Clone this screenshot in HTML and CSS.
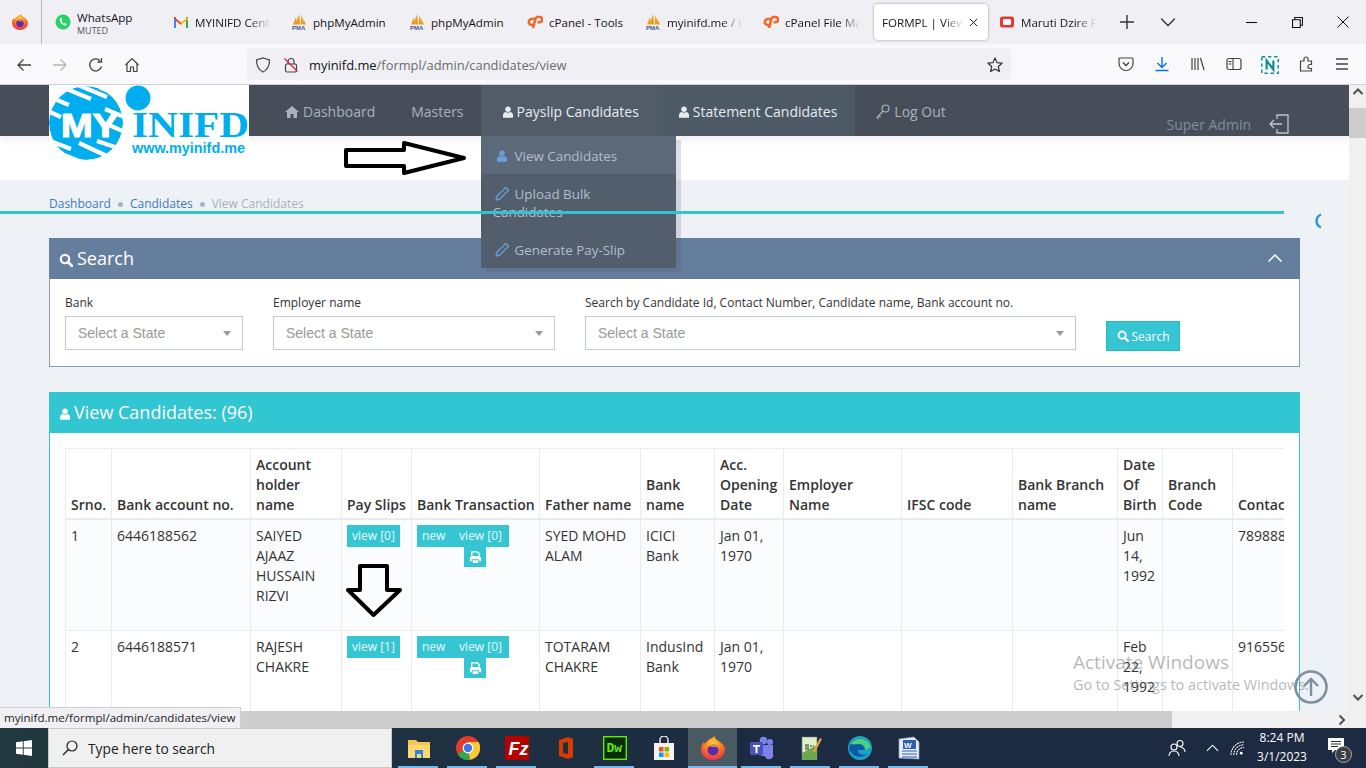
FILE: index.html
```html
<!DOCTYPE html>
<html lang="en">
<head>
<meta charset="utf-8">
<title>FORMPL | View Candidates</title>
<link rel="stylesheet" href="styles.css">
</head>
<body>
<svg class="defs" width="0" height="0" aria-hidden="true">
  <defs>
    <radialGradient id="ffg" cx="50%" cy="30%" r="75%"><stop offset="0" stop-color="#ffd23a"/><stop offset=".5" stop-color="#ff7a1a"/><stop offset="1" stop-color="#e8235e"/></radialGradient>
    <symbol id="i-firefox" viewBox="0 0 16 16"><path d="M9 0c.2 1.600 1.400 2.300 2.800 3.300C14.300 5 16 6.500 16 9A8 7 0 0 1 0 9C0 7 .7 5.300 2 4l.6 1.500C3.600 3 6.800 1.800 9 0z" fill="url(#ffg)"/><circle cx="8" cy="9.300" r="3.700" fill="#5a2bb3"/><path d="M4.500 7c1.800-1.500 5.200-1.500 7 .7-2.300-.6-4.700-.8-7-.7z" fill="#ff9a2a"/></symbol>
    <symbol id="i-pma" viewBox="0 0 16 16"><path d="M4.500 10.500L8 0l1.200 10.500zM9.600 10.500L10.500 1l2.700 9.500zM2 10.500L5 3l1 7.500zM13 10.500L12 4l3 6.500z" fill="#f29a1f"/><text x="1" y="16" font-size="6" font-weight="700" font-family="Liberation Sans" fill="#3a5a8c">PMA</text></symbol>
    <symbol id="i-cp" viewBox="0 0 16 16"><path d="M7.500 5H4.800a3 3 0 0 0 0 6H6" fill="none" stroke="#f3682a" stroke-width="2.600"/><path d="M9 3h3.500a2.600 2.600 0 0 1 0 5.200H10.500M9 3L6 14" fill="none" stroke="#f3682a" stroke-width="2.600"/></symbol>
    <symbol id="i-user" viewBox="0 0 12 14"><circle cx="6" cy="3.600" r="3.300"/><path d="M0 14v-3.500C0 8.300 2 7 3.500 7c.8.600 1.600.9 2.500.9s1.700-.3 2.500-.9C10 7 12 8.300 12 10.500V14z"/></symbol>
    <symbol id="i-pencil" viewBox="0 0 16 16"><path d="M11.500 1.500l3 3L5 14l-4 1 1-4z" fill="none" stroke="currentColor" stroke-width="1.400" stroke-linejoin="round"/></symbol>
    <symbol id="i-search" viewBox="0 0 14 14"><circle cx="6" cy="6" r="4.200" fill="none" stroke="currentColor" stroke-width="2.200"/><path d="M9 9l4 4" stroke="currentColor" stroke-width="2.600" stroke-linecap="round"/></symbol>
    <symbol id="i-print" viewBox="0 0 14 14"><path d="M3 1h6l2 2v3H3z" fill="none" stroke="currentColor" stroke-width="1.400"/><path d="M1 6.500h12V11h-2V9H3v2H1zM4 10h6v3H4z" fill="currentColor"/></symbol>
  </defs>
</svg>

<header class="tabbar">
  <div class="ff-btn"><svg class="ico16"><use href="#i-firefox"/></svg></div>
  <div class="tab">
    <svg class="ico16" viewBox="0 0 16 16"><circle cx="8" cy="8" r="7.500" fill="#25d366"/><path d="M5.300 4.300c-1 1-.8 2.700.7 4.600 1.600 2 3.300 3 4.700 2.600.8-.3 1.200-1 1.100-1.500L10 9c-.3.400-.6.800-1 .7-1-.4-2.300-1.800-2.600-2.800 0-.4.400-.7.600-1L6.300 4c-.3-.1-.7 0-1 .3z" fill="#fff"/></svg>
    <span class="wa"><span class="wa-name">WhatsApp</span><span class="wa-sub">MUTED</span></span>
  </div>
  <div class="tab">
    <svg class="ico16" viewBox="0 0 16 16"><path d="M1 14V3l2 0v11z" fill="#4285f4"/><path d="M13 14V3h2v11z" fill="#34a853"/><path d="M1 3l7 5.500V11L1 5.500z" fill="#ea4335"/><path d="M15 3L8 8.500V11l7-5.500z" fill="#fbbc04"/></svg>
    <span class="tab-label fade">MYINIFD Central</span>
  </div>
  <div class="tab"><svg class="ico16"><use href="#i-pma"/></svg><span class="tab-label">phpMyAdmin</span></div>
  <div class="tab"><svg class="ico16"><use href="#i-pma"/></svg><span class="tab-label">phpMyAdmin</span></div>
  <div class="tab"><svg class="ico16"><use href="#i-cp"/></svg><span class="tab-label">cPanel - Tools</span></div>
  <div class="tab"><svg class="ico16"><use href="#i-pma"/></svg><span class="tab-label fade">myinifd.me / localhost</span></div>
  <div class="tab"><svg class="ico16"><use href="#i-cp"/></svg><span class="tab-label fade">cPanel File Manager</span></div>
  <div class="tab tab-active"><span class="tab-label fade">FORMPL | View Candidates</span>
    <svg class="tab-x" viewBox="0 0 10 10"><path d="M1 1l8 8M9 1l-8 8" stroke="#222" stroke-width="1.100"/></svg>
  </div>
  <div class="tab"><svg class="ico16" viewBox="0 0 16 16"><rect x="1" y="2.500" width="14" height="11" rx="2.500" fill="#e8392f"/><rect x="4" y="5" width="8" height="6" rx="1" fill="#fff"/></svg><span class="tab-label fade">Maruti Dzire Price</span></div>
  <div class="tb-btn tb-plus"><svg class="ico12" viewBox="0 0 12 12"><path d="M6 0v12M0 6h12" stroke="#333" stroke-width="1.200"/></svg></div>
  <div class="tb-btn tb-chev"><svg class="ico12" viewBox="0 0 12 12"><path d="M0 3l6 6 6-6" fill="none" stroke="#333" stroke-width="1.100"/></svg></div>
  <div class="winctl">
    <div class="win-btn"><svg class="ico10" viewBox="0 0 10 10"><path d="M0 5h10" stroke="#111"/></svg></div>
    <div class="win-btn"><svg class="ico10" viewBox="0 0 10 10"><path d="M2.500 2.500V.5h7v7h-2M.5 2.500h7v7h-7z" fill="none" stroke="#111"/></svg></div>
    <div class="win-btn"><svg class="ico10b" viewBox="0 0 12 12"><path d="M.5.5l11 11M11.500.5l-11 11" stroke="#111"/></svg></div>
  </div>
</header>

<nav class="toolbar">
  <div class="tool"><svg class="ico16" viewBox="0 0 16 16"><path d="M15 8H2M7.500 2.500L2 8l5.500 5.500" fill="none" stroke="#444" stroke-width="1.300"/></svg></div>
  <div class="tool"><svg class="ico16" viewBox="0 0 16 16"><path d="M1 8h13M8.500 2.500L14 8l-5.500 5.500" fill="none" stroke="#b5b5b9" stroke-width="1.300"/></svg></div>
  <div class="tool"><svg class="ico16" viewBox="0 0 16 16"><path d="M13.500 9.500A6 6 0 1 1 12 3.700M13.500 1v4h-4" fill="none" stroke="#444" stroke-width="1.300"/></svg></div>
  <div class="tool"><svg class="ico16" viewBox="0 0 16 16"><path d="M1.500 8L8 1.500 14.500 8M3 7v7.500h3.500V10h3v4.500H13V7" fill="none" stroke="#444" stroke-width="1.200"/></svg></div>
  <div class="urlbar">
    <svg class="ico16" viewBox="0 0 16 16"><path d="M8 1l6.500 2c0 5-1.500 9.500-6.500 12C3 12.500 1.500 8 1.500 3z" fill="none" stroke="#444" stroke-width="1.200"/></svg>
    <svg class="ico16 lock" viewBox="0 0 16 16"><rect x="2.500" y="7" width="11" height="8" rx="1.500" fill="none" stroke="#444" stroke-width="1.200"/><path d="M5 7V4.500a3 3 0 0 1 6 0V7" fill="none" stroke="#444" stroke-width="1.200"/><path d="M1.500 1.500l13 13" stroke="#e22850" stroke-width="1.400"/></svg>
    <span class="url"><b class="url-host">myinifd.me</b>/formpl/admin/candidates/view</span>
    <svg class="ico16 star" viewBox="0 0 16 16"><path d="M8 1l2.100 4.700 5 .5-3.800 3.300 1.100 5L8 11.900l-4.400 2.600 1.100-5L.9 6.200l5-.5z" fill="none" stroke="#333" stroke-width="1.200" stroke-linejoin="round"/></svg>
  </div>
  <div class="tools-right">
    <div class="tool"><svg class="ico16" viewBox="0 0 16 16"><path d="M2 2h12c.6 0 1 .4 1 1v4.500a7 7 0 0 1-14 0V3c0-.6.400-1 1-1z" fill="none" stroke="#444" stroke-width="1.200"/><path d="M5 6.500l3 3 3-3" fill="none" stroke="#444" stroke-width="1.400"/></svg></div>
    <div class="tool"><svg class="ico16" viewBox="0 0 16 16"><path d="M8 1v10M3.500 7L8 11.500 12.500 7M1.500 14.500h13" fill="none" stroke="#0a70e0" stroke-width="1.400"/></svg></div>
    <div class="tool"><svg class="ico16" viewBox="0 0 16 16"><path d="M2 2v12M5 2v12M8 2v12M10.500 2l3.500 12" fill="none" stroke="#444" stroke-width="1.200"/></svg></div>
    <div class="tool"><svg class="ico16" viewBox="0 0 16 16"><rect x="1" y="2.500" width="14" height="11" rx="2" fill="none" stroke="#444" stroke-width="1.200"/><path d="M7 2.500v11M2.500 5.500h3M2.500 8h3" fill="none" stroke="#444" stroke-width="1.100"/></svg></div>
    <div class="tool"><svg class="ico16n" viewBox="0 0 16 16"><rect x=".7" y=".7" width="14.600" height="14.600" fill="none" stroke="#0e8a98" stroke-width="1.300" stroke-dasharray="3 2.500"/><path d="M5 12V4l6 8V4" fill="none" stroke="#0e8a98" stroke-width="1.900"/></svg></div>
    <div class="tool"><svg class="ico16" viewBox="0 0 16 16"><path d="M2 5h3.500V3a2 2 0 0 1 4 0v2H13v3.500h-1.500a2 2 0 0 0 0 4H13V15H2z" fill="none" stroke="#444" stroke-width="1.200" transform="translate(.5 0)"/></svg></div>
    <div class="tool"><svg class="ico16" viewBox="0 0 16 16"><path d="M2 3h12M2 8h12M2 13h12" stroke="#444" stroke-width="1.300"/></svg></div>
  </div>
</nav>

<div class="viewport">
  <div class="page-col">
    <main class="page">
      <div class="band">
        <div class="site-nav">
          <a class="logo" href="#">
            <svg class="logo-svg" viewBox="0 0 200 76">
              <defs><clipPath id="globe"><circle cx="37" cy="38" r="37"/></clipPath></defs>
              <rect width="200" height="76" fill="#fff"/>
              <g clip-path="url(#globe)">
                <circle cx="37" cy="38" r="37" fill="#00aeef"/>
                <path d="M8 0l34 14M24 -2l34 14M50 2l22 9M-4 10l24 10M-6 24l18 8M-4 54l26 10M0 64l30 12M30 58l30 14M48 56l30 10M60 40l20 9M56 24l24 10" stroke="#fff" stroke-width="4.200"/>
              </g>
              <text class="logo-my" x="12" y="52" textLength="57" lengthAdjust="spacingAndGlyphs">MY</text>
              <circle cx="89" cy="13" r="12.500" fill="#00aeef"/>
              <text class="logo-in" x="83" y="52" textLength="117" lengthAdjust="spacingAndGlyphs">INIFD</text>
              <text class="logo-url" x="83" y="68" textLength="113" lengthAdjust="spacingAndGlyphs">www.myinifd.me</text>
            </svg>
          </a>
          <ul class="menu">
            <li class="menu-item"><svg class="nav-home" viewBox="0 0 14 12"><path d="M7 0L0 6h2v6h3.500V8h3v4H12V6h2z" fill="currentColor"/></svg>Dashboard</li>
            <li class="menu-item">Masters</li>
            <li class="menu-item is-open"><svg class="nav-user"><use href="#i-user"/></svg>Payslip Candidates
              <ul class="dropdown">
                <li class="drop-item is-current"><svg class="drop-user"><use href="#i-user"/></svg>View Candidates</li>
                <li class="drop-item"><svg class="drop-pen"><use href="#i-pencil"/></svg>Upload Bulk Candidates</li>
                <li class="drop-item"><svg class="drop-pen"><use href="#i-pencil"/></svg>Generate Pay-Slip</li>
              </ul>
            </li>
            <li class="menu-item is-lit"><svg class="nav-user"><use href="#i-user"/></svg>Statement Candidates</li>
            <li class="menu-item"><svg class="nav-key" viewBox="0 0 14 16"><circle cx="9.500" cy="4.500" r="3.500" fill="none" stroke="currentColor" stroke-width="1.200"/><path d="M7 7L1 13.500l1.500 1.500M3 11.500l1.500 1.500" fill="none" stroke="currentColor" stroke-width="1.200"/></svg>Log Out</li>
          </ul>
          <div class="nav-user-box">
            <span>Super Admin</span>
            <svg class="exit" viewBox="0 0 20 20"><path d="M8 5V1h11v18H8v-4M13 10H1M5 6l-4 4 4 4" fill="none" stroke="currentColor" stroke-width="1.300"/></svg>
          </div>
        </div>
      </div>

      <div class="crumbs">
        <a class="crumb" href="#">Dashboard</a><i class="dot"></i>
        <a class="crumb" href="#">Candidates</a><i class="dot"></i>
        <span class="crumb-now">View Candidates</span>
      </div>

      <section class="panel panel-search">
        <div class="panel-head">
          <svg class="ph-search"><use href="#i-search"/></svg><span>Search</span>
          <svg class="ph-chev" viewBox="0 0 14 8"><path d="M.5 7.500L7 1l6.500 6.500" fill="none" stroke="#fff" stroke-width="1.500"/></svg>
        </div>
        <form class="search-form">
          <div class="field f-bank"><label class="field-label">Bank</label><div class="select"><span>Select a State</span><i class="caret"></i></div></div>
          <div class="field f-emp"><label class="field-label">Employer name</label><div class="select"><span>Select a State</span><i class="caret"></i></div></div>
          <div class="field f-any"><label class="field-label">Search by Candidate Id, Contact Number, Candidate name, Bank account no.</label><div class="select"><span>Select a State</span><i class="caret"></i></div></div>
          <button class="search-btn" type="button"><svg class="btn-search"><use href="#i-search"/></svg>Search</button>
        </form>
      </section>

      <section class="panel panel-list">
        <div class="panel-head">
          <svg class="ph-user"><use href="#i-user"/></svg><span>View Candidates: (96)</span>
        </div>
        <div class="panel-body">
          <div class="table-wrap">
            <table class="grid">
              <colgroup>
                <col class="c1"><col class="c2"><col class="c3"><col class="c4"><col class="c5"><col class="c6"><col class="c7"><col class="c8"><col class="c9"><col class="c10"><col class="c11"><col class="c12"><col class="c13"><col class="c14">
              </colgroup>
              <thead>
                <tr>
                  <th>Srno.</th><th>Bank account no.</th><th>Account holder name</th><th>Pay Slips</th><th class="th-wide">Bank Transaction</th><th>Father name</th><th>Bank name</th><th>Acc. Opening Date</th><th>Employer Name</th><th>IFSC code</th><th>Bank Branch name</th><th>Date Of Birth</th><th>Branch Code</th><th>Contact</th>
                </tr>
              </thead>
              <tbody>
                <tr class="odd">
                  <td>1</td><td>6446188562</td><td>SAIYED AJAAZ HUSSAIN RIZVI</td>
                  <td><a class="chip" href="#">view [0]</a></td>
                  <td><div class="chip-group"><a class="chip" href="#">new</a><a class="chip" href="#">view [0]</a></div><div class="print-row"><a class="chip-print" href="#"><svg class="print"><use href="#i-print"/></svg></a></div></td>
                  <td>SYED MOHD ALAM</td><td>ICICI Bank</td><td>Jan 01, 1970</td><td></td><td></td><td></td><td>Jun 14, 1992</td><td></td><td class="nowrap">789888</td>
                </tr>
                <tr>
                  <td>2</td><td>6446188571</td><td>RAJESH CHAKRE</td>
                  <td><a class="chip" href="#">view [1]</a></td>
                  <td><div class="chip-group"><a class="chip" href="#">new</a><a class="chip" href="#">view [0]</a></div><div class="print-row"><a class="chip-print" href="#"><svg class="print"><use href="#i-print"/></svg></a></div></td>
                  <td>TOTARAM CHAKRE</td><td>IndusInd Bank</td><td>Jan 01, 1970</td><td></td><td></td><td></td><td>Feb 22, 1992</td><td></td><td class="nowrap">916556</td>
                </tr>
              </tbody>
            </table>
          </div>
        </div>
      </section>

      <svg class="spinner" viewBox="0 0 10 16"><path d="M9 1.500A7 7 0 0 0 9 14.500" fill="none" stroke="#2a96dc" stroke-width="2.400"/></svg>
      <svg class="anno-right" viewBox="0 0 124 36"><path d="M2 10h58V3l60 15-60 15v-7H2z" fill="#fff" stroke="#000" stroke-width="4" stroke-linejoin="round"/></svg>
      <svg class="anno-down" viewBox="0 0 56 53"><path d="M14 2h27v24h13L27.500 51 2 26h12z" fill="#fbfcfe" stroke="#000" stroke-width="4" stroke-linejoin="round"/></svg>
      <div class="activate"><div class="act-1">Activate Windows</div><div class="act-2">Go to Settings to activate Windows.</div></div>
      <svg class="to-top" viewBox="0 0 34 34"><circle cx="17" cy="17" r="15.500" fill="none" stroke="#7d8fa1" stroke-width="2.600"/><path d="M17 26V9M10 16l7-7 7 7" fill="none" stroke="#7d8fa1" stroke-width="2.400"/></svg>
    </main>
    <div class="hscroll">
      <div class="hthumb"></div>
      <svg class="sb-arrow" viewBox="0 0 8 12"><path d="M1.500 1.500L6 6l-4.500 4.500" fill="none" stroke="#505050" stroke-width="2"/></svg>
    </div>
  </div>
  <div class="vscroll">
    <svg class="sb-arrow-v" viewBox="0 0 12 8"><path d="M1.500 6L6 1.500 10.500 6" fill="none" stroke="#505050" stroke-width="2"/></svg>
    <div class="vthumb"></div>
    <svg class="sb-arrow-v v-down" viewBox="0 0 12 8"><path d="M1.500 2L6 6.500 10.500 2" fill="none" stroke="#505050" stroke-width="2"/></svg>
  </div>
  <div class="status">myinifd.me/formpl/admin/candidates/view</div>
</div>

<footer class="taskbar">
  <div class="start"><svg class="win-logo" viewBox="0 0 16 16"><path d="M0 2.300l6.800-1v6.200H0zM7.700 1.200L16 0v7.500H7.700zM0 8.400h6.800v6.300L0 13.700zM7.700 8.400H16V16l-8.300-1.200z" fill="#fff"/></svg></div>
  <div class="ts-box">
    <svg class="ts-ico" viewBox="0 0 16 16"><circle cx="10" cy="6" r="5" fill="none" stroke="#222" stroke-width="1.200"/><path d="M6.500 9.500L1 15" stroke="#222" stroke-width="1.400"/></svg>
    <span>Type here to search</span>
  </div>
  <div class="apps">
    <div class="app on"><svg class="app-ico" viewBox="0 0 24 24"><path d="M1 4h8l2 2h12v16H1z" fill="#f6c64f"/><path d="M1 9h22v13H1z" fill="#fbd873"/><path d="M8 14h8v8h-2v-4h-4v4H8z" fill="#2a86d8"/></svg></div>
    <div class="app on"><svg class="app-ico" viewBox="0 0 24 24"><circle cx="12" cy="12" r="12" fill="#e33b2e"/><path d="M12 12L1.600 18A12 12 0 0 0 14 23.800z" fill="#2fa84f"/><path d="M12 6h10.600A12 12 0 0 1 14 23.800L12 12z" fill="#fcc934"/><circle cx="12" cy="12" r="5.400" fill="#fff"/><circle cx="12" cy="12" r="4.200" fill="#3b78e7"/></svg></div>
    <div class="app on"><svg class="app-ico" viewBox="0 0 24 24"><rect width="24" height="24" fill="#b30000"/><text class="fz" x="3.500" y="19" >Fz</text></svg></div>
    <div class="app"><svg class="app-ico" viewBox="0 0 24 24"><path d="M14 1L5 4v16l9 3 5-2V3z" fill="#d83b01"/><path d="M9 7l5-1v12l-5-1z" fill="#20303a"/></svg></div>
    <div class="app on"><svg class="app-ico" viewBox="0 0 24 24"><rect x=".7" y=".7" width="22.600" height="22.600" fill="#0a2a08" stroke="#5cf000" stroke-width="1.400"/><text class="dw" x="3.500" y="16">Dw</text></svg></div>
    <div class="app"><svg class="app-ico" viewBox="0 0 24 24"><path d="M8 7V4a4 4 0 0 1 8 0v3" fill="none" stroke="#e8e8e8" stroke-width="1.500"/><rect x="2" y="7" width="20" height="17" fill="#f3f3f3"/><rect x="7" y="11" width="4.500" height="4.500" fill="#f25022"/><rect x="12.500" y="11" width="4.500" height="4.500" fill="#7fba00"/><rect x="7" y="16.500" width="4.500" height="4.500" fill="#00a4ef"/><rect x="12.500" y="16.500" width="4.500" height="4.500" fill="#ffb900"/></svg></div>
    <div class="app on app-active"><svg class="app-ico"><use href="#i-firefox"/></svg></div>
    <div class="app on"><svg class="app-ico" viewBox="0 0 24 24"><circle cx="20" cy="6" r="3" fill="#7b83eb"/><circle cx="13.500" cy="4.500" r="3.800" fill="#7b83eb"/><path d="M11 9h12v9a4 4 0 0 1-8 2h-4z" fill="#7b83eb"/><rect x="0" y="6" width="13" height="13" rx="1" fill="#4b53bc"/><path d="M3 9h7v1.800H7.500V17h-2v-6.200H3z" fill="#fff"/></svg></div>
    <div class="app on"><svg class="app-ico" viewBox="0 0 24 24"><path d="M3 1h15v23H3z" fill="#dff0c8" stroke="#777" stroke-width=".6"/><path d="M3 17l15-8v15H3z" fill="#6aa84f"/><path d="M7 8v6M9 8v6M11 10h2M14 10h1" stroke="#333" stroke-width="1"/><path d="M14 15L21 2l2 1-7 13-2 1z" fill="#e8a33a"/></svg></div>
    <div class="app on"><svg class="app-ico" viewBox="0 0 24 24"><circle cx="12" cy="12" r="12" fill="#1aa3c9"/><path d="M1 13A11 11 0 0 1 22 9c1 3-2 5-5 5H10c0 4 4 6 10 4a12 12 0 0 1-19-5z" fill="#0c59a4"/><path d="M3 8c3-6 14-8 19 1 1 3-2 5-5 5 0-4-3-6-6-6-3 0-6 1-8 0z" fill="#4ad07f"/></svg></div>
    <div class="app on"><svg class="app-ico" viewBox="0 0 24 24"><path d="M2 3l15-2 5 5v17l-20-1z" fill="#e8eef8" stroke="#8aa0c8" stroke-width=".7"/><rect x="6" y="4" width="13" height="9" fill="#2a5eb0"/><text class="wd" x="7" y="12">W</text><path d="M5 15h15M5 18h15M5 21h15" stroke="#2a5eb0" stroke-width="1.200"/></svg></div>
  </div>
  <div class="tray">
    <svg class="tr-people" viewBox="0 0 18 18"><circle cx="12" cy="4.500" r="3" fill="none" stroke="#fff" stroke-width="1.100"/><circle cx="6" cy="8" r="3" fill="none" stroke="#fff" stroke-width="1.100"/><path d="M1 17c0-3 2-5 5-5s5 2 5 5M12 8c2.500 0 5 2 5 5" fill="none" stroke="#fff" stroke-width="1.100"/></svg>
    <svg class="tr-up" viewBox="0 0 14 8"><path d="M1 7l6-6 6 6" fill="none" stroke="#fff" stroke-width="1.200"/></svg>
    <svg class="tr-wifi" viewBox="0 0 16 16"><path d="M1 15A14 14 0 0 1 15 1M4 15A11 11 0 0 1 15 4M7 15A8 8 0 0 1 15 7" fill="none" stroke="#fff" stroke-width="1.100" stroke-dasharray="2 .8"/><circle cx="12" cy="13" r="1.500" fill="#fff"/></svg>
    <div class="clock"><span>8:24 PM</span><span>3/1/2023</span></div>
    <div class="notif">
      <svg class="notif-ico" viewBox="0 0 16 16"><path d="M0 0h16v12H7l-3 3v-3H0z" fill="#fff"/><path d="M3 3.500h10M3 6h10M3 8.500h7" stroke="#1b2a40" stroke-width="1"/></svg>
      <span class="badge">3</span>
    </div>
  </div>
</footer>
</body>
</html>
```

FILE: styles.css
```css
* { box-sizing: border-box; }
html, body { margin: 0; height: 100%; }
body {
  width: 1366px; height: 768px; overflow: hidden;
  display: flex; flex-direction: column;
  font-family: "Open Sans", "Noto Sans", sans-serif;
  color: #333; font-size: 14px; background: #fff;
}
.defs { position: absolute; }
a { color: inherit; text-decoration: none; }
ul { list-style: none; margin: 0; padding: 0; }
svg { display: block; flex: none; fill: currentColor; }
.ico16 { width: 16px; height: 16px; }
.ico16n { width: 18px; height: 18px; }
.ico12 { width: 14px; height: 14px; }
.ico10 { width: 11px; height: 11px; }
.ico10b { width: 12px; height: 12px; }

/* browser tab strip */
.tabbar { height: 44px; flex: none; display: flex; background: #f0f0f4; align-items: stretch; }
.ff-btn { width: 42px; border-right: 1px solid #b9b9bc; display: flex; align-items: center; padding-left: 12px; margin-right: 5px; }
.tab { width: 118px; padding-left: 8px; display: flex; align-items: center; gap: 6px; font-size: 11.600px; color: #15141a; white-space: nowrap; overflow: hidden; }
.tab-label { overflow: hidden; flex: 1; min-width: 0; padding-right: 12px; }
.tab-label.fade {
  -webkit-mask-image: linear-gradient(to right, #000 62%, transparent 86%);
  mask-image: linear-gradient(to right, #000 62%, transparent 86%);
}
.wa { display: flex; flex-direction: column; margin-top: 2px; }
.wa-name { line-height: 15px; margin-top: 1px; }
.wa-sub { font-size: 9px; line-height: 12px; color: #555; }
.tab-active { width: 114px; height: 36px; margin: 4px 3px 0 1px; background: #fff; border-radius: 4px; box-shadow: 0 0 3px rgba(0,0,0,.35); gap: 0; padding-right: 10px; }
.tab-active .tab-label { padding-right: 0; }
.tab-active .tab-label.fade {
  -webkit-mask-image: linear-gradient(to right, #000 76%, transparent 99%);
  mask-image: linear-gradient(to right, #000 76%, transparent 99%);
}
.tab-x { width: 9px; height: 9px; flex: none; margin-left: 5px; }
.tb-btn { width: 36px; display: flex; align-items: center; justify-content: center; }
.tb-chev { margin-left: 5px; }
.winctl { margin-left: auto; display: flex; }
.win-btn { width: 46px; display: flex; align-items: center; justify-content: center; }

/* browser toolbar */
.toolbar { height: 41px; flex: none; display: flex; align-items: center; background: #f9f9fb; border-bottom: 1px solid #cfcfd8; padding-left: 6px; }
.tool { width: 36px; display: flex; justify-content: center; padding-top: 1px; }
.urlbar { width: 764px; height: 32px; margin-left: 97px; border-radius: 4px; background: #f0f0f4; display: flex; align-items: center; padding: 1px 8px 0; }
.lock { margin-left: 12px; }
.url { margin-left: 10px; font-size: 12.900px; color: #6b6b70; flex: 1; }
.url-host { font-weight: 400; color: #15141a; }
.tools-right { margin-left: 97px; display: flex; }

/* viewport */
.viewport { flex: 1; min-height: 0; display: flex; position: relative; }
.page-col { flex: 1; min-width: 0; display: flex; flex-direction: column; }
.page { flex: 1; min-height: 0; overflow: hidden; position: relative; background: #eef1f6; }
.band { height: 95px; background: #fff; }

/* site nav */
.site-nav { height: 51px; background: #474e59; display: flex; position: relative; z-index: 1; padding-left: 267px; box-shadow: 0 3px 10px rgba(0,0,0,.08); }
.logo { position: absolute; left: 49px; top: 0; width: 200px; height: 76px; display: block; }
.logo-svg { width: 200px; height: 76px; }
.logo-my { font: 700 34px "Liberation Sans", sans-serif; fill: #fff; stroke: #fff; stroke-width: 1.200px; }
.logo-in { font: 700 36px "Liberation Serif", serif; fill: #00aeef; }
.logo-url { font: 700 14px "Liberation Sans", sans-serif; fill: #00aeef; }
.menu { display: flex; }
.menu-item { padding: 2px 18px 0; display: flex; align-items: center; font-size: 14px; color: #a9b2bd; white-space: nowrap; position: relative; }
.is-open { background: #525c69; color: #e6ebf0; margin-left: -1px; }
.is-lit { background: #4d5964; color: #e6ebf0; }
.nav-home { width: 14px; height: 12px; margin-right: 4px; }
.nav-user { width: 10px; height: 12px; margin: 0 4px; }
.nav-key { width: 14px; height: 16px; margin: 0 4px 0 3px; }
.nav-user-box { margin-left: auto; align-self: flex-end; padding: 0 60px 2px 0; display: flex; align-items: center; gap: 18px; color: #7e8da1; font-size: 14px; }
.exit { width: 20px; height: 20px; color: #bcc8d4; }
.dropdown { position: absolute; left: 0; top: 51px; width: 195px; background: #535e6c; box-shadow: 5px 4px 0 rgba(70,80,100,.18); color: #b4bdca; white-space: normal; }
.drop-item { padding: 11px 12px 9px; line-height: 18px; font-size: 13.400px; }
.is-current { background: #5c6979; }
.drop-user { width: 10px; height: 12px; color: #6a9fd8; display: inline-block; margin: 0 8px 0 4px; vertical-align: -1px; }
.drop-pen { width: 15px; height: 15px; color: #6a9fd8; display: inline-block; margin: 0 5px 0 2px; vertical-align: -2px; }

/* breadcrumbs */
.crumbs { height: 34px; padding: 17px 0 0 49px; border-bottom: 3px solid #36c1d0; width: 1284px; display: flex; align-items: center; gap: 7px; font-size: 12px; line-height: 16px; position: relative; z-index: 2; }
.crumb { color: #3a7bbf; }
.crumb-now { color: #a7b2c0; }
.dot { width: 5px; height: 5px; border-radius: 50%; background: #a7b2c0; }

/* panels */
.panel { margin: 24px 49px 0; width: 1251px; background: #fff; border: 1px solid #8a9cb8; }
.panel-list { margin-top: 25px; border-color: #32c5d2; }
.panel-head { display: flex; align-items: center; color: #fff; font-size: 18px; padding: 0 0 2px 10px; margin: -1px -1px 0; height: 41px; }
.panel-search .panel-head { background: #667e9e; }
.panel-list .panel-head { background: #32c5d2; }
.ph-search { width: 14px; height: 14px; margin: 5px 4px 0 0; }
.ph-chev { width: 14px; height: 8px; margin-left: auto; margin-right: 18px; }
.ph-user { width: 10px; height: 12px; margin: 5px 4px 0 1px; }

.search-form { display: flex; gap: 30px; padding: 15px 15px 16px; align-items: flex-end; }
.field-label { display: block; font-size: 12px; line-height: 17px; margin-bottom: 5px; color: #333; }
.f-bank { width: 178px; }
.f-emp { width: 282px; }
.f-any { width: 491px; }
.select { height: 34px; border: 1.500px solid #c2cad8; background: #fff; display: flex; align-items: center; padding: 0 12px; font: 14px "Liberation Sans", Arial, sans-serif; color: #999; justify-content: space-between; }
.caret { width: 0; height: 0; border: 4px solid transparent; border-top: 5px solid #999; border-bottom: 0; margin-right: -1px; }
.search-btn { width: 74px; height: 30px; padding: 0; background: #36c6d3; border: 1px solid #2bb8c4; color: #fff; font: 12px "Open Sans", sans-serif; display: flex; align-items: center; justify-content: center; gap: 3px; margin-bottom: -1px; }
.btn-search { width: 12px; height: 12px; }

/* list */
.panel-body { padding: 15px; }
.table-wrap { width: 1219px; overflow: hidden; }
.grid { border-collapse: collapse; table-layout: fixed; width: 1287px; line-height: 20px; }
.c1 { width: 46px; } .c2 { width: 139px; } .c3 { width: 91px; } .c4 { width: 70px; } .c5 { width: 128px; }
.c6 { width: 101px; } .c7 { width: 74px; } .c8 { width: 69px; } .c9 { width: 118px; } .c10 { width: 111px; }
.c11 { width: 105px; } .c12 { width: 45px; } .c13 { width: 70px; } .c14 { width: 120px; }
.grid th, .grid td { border: 1px solid #e7ecf1; text-align: left; overflow: hidden; }
.grid th { font-weight: 600; vertical-align: bottom; padding: 6px 5px 3px; border-bottom-width: 2px; white-space: normal; }
.grid .th-wide { white-space: nowrap; padding-right: 0; }
.grid td { vertical-align: top; padding: 6px 5px 24px; }
.odd td { background: #fbfcfe; }
.nowrap { white-space: nowrap; }
.chip { display: inline-block; height: 22px; line-height: 22px; padding: 0 5px; font-size: 12px; color: #e6fafc; background: #36c6d3; vertical-align: top; margin-top: -1px; }
.chip-group { display: flex; width: 92px; margin-top: -1px; background: #36c6d3; justify-content: space-between; padding-right: 2px; }
.chip-group .chip { margin-top: 0; }
.print-row { display: flex; justify-content: center; margin-left: -1px; }
.chip-print { display: flex; width: 22px; height: 20px; align-items: center; justify-content: center; background: #36c6d3; color: #fff; }
.print { width: 13px; height: 13px; }

/* overlays on the page */
.spinner { position: absolute; left: 1312px; top: 128px; width: 10px; height: 16px; }
.anno-right { position: absolute; left: 344px; top: 55px; width: 124px; height: 36px; z-index: 3; }
.anno-down { position: absolute; left: 346px; top: 479px; width: 56px; height: 53px; }
.activate { position: absolute; left: 1073px; top: 565px; color: rgba(110,110,110,.5); pointer-events: none; }
.act-1 { font-size: 19px; line-height: 24px; white-space: nowrap; }
.act-2 { font-size: 14.400px; line-height: 22px; white-space: nowrap; }
.to-top { position: absolute; left: 1294px; top: 585px; width: 34px; height: 34px; }

/* scrollbars */
.hscroll { height: 17px; flex: none; background: #f0f0f0; position: relative; display: flex; align-items: center; justify-content: flex-end; padding-right: 3px; }
.hthumb { position: absolute; left: 0; top: 0; bottom: 0; width: 1172px; background: #cdcdcd; }
.sb-arrow { width: 8px; height: 12px; }
.vscroll { width: 17px; flex: none; background: #f0f0f0; display: flex; flex-direction: column; padding-top: 3px; }
.sb-arrow-v { width: 12px; height: 8px; margin: 0 auto; }
.vthumb { height: 30px; margin-top: 12px; background: #cdcdcd; }
.v-down { margin-top: 555px; }
.status { position: absolute; left: 0; bottom: 0; width: 241px; height: 21px; background: #f0f0f4; border: 1px solid #d0d0d6; border-left: 0; border-bottom: 0; font-size: 11.600px; line-height: 20px; padding-left: 4px; color: #222; white-space: nowrap; }

/* windows taskbar */
.taskbar { height: 40px; flex: none; display: flex; background: linear-gradient(to right, #21393f, #1c2a42 60%); color: #fff; }
.start { width: 48px; display: flex; align-items: center; justify-content: center; }
.win-logo { width: 16px; height: 16px; }
.ts-box { width: 344px; background: #f0f0f0; border: 1px solid #c8c8c8; display: flex; align-items: center; color: #222; font-size: 13.800px; padding-left: 13px; gap: 10px; }
.ts-ico { width: 16px; height: 16px; }
.apps { display: flex; margin-left: 2px; }
.app { width: 49px; display: flex; align-items: center; justify-content: center; position: relative; }
.app.on::after { content: ""; position: absolute; left: 4px; right: 5px; bottom: 0; height: 2px; background: #76b9ed; }
.app-active { background: #4a5a62; }
.app-active.on::after { left: 0; right: 0; }
.app-ico { width: 24px; height: 24px; }
.fz { font: italic 700 18px "Liberation Sans", sans-serif; fill: #fff; }
.dw { font: 700 13px "Liberation Mono", monospace; fill: #5cf000; }
.wd { font: 700 8px "Liberation Sans", sans-serif; fill: #fff; }
.tray { margin-left: auto; display: flex; align-items: center; padding-right: 22px; }
.tr-people { width: 18px; height: 18px; margin-right: 20px; }
.tr-up { width: 13px; height: 8px; margin-right: 11px; }
.tr-wifi { width: 15px; height: 15px; margin-right: 12px; }
.clock { width: 50px; display: flex; flex-direction: column; align-items: center; font-size: 12px; line-height: 19px; white-space: nowrap; margin: -2px 21px 0 0; }
.notif { position: relative; width: 16px; height: 24px; }
.notif-ico { width: 16px; height: 16px; margin-top: 2px; }
.badge { position: absolute; left: 7px; top: 10px; width: 17px; height: 17px; border-radius: 50%; background: #3a3f46; border: 1px solid #aaa; font-size: 11px; line-height: 15px; text-align: center; }
```
